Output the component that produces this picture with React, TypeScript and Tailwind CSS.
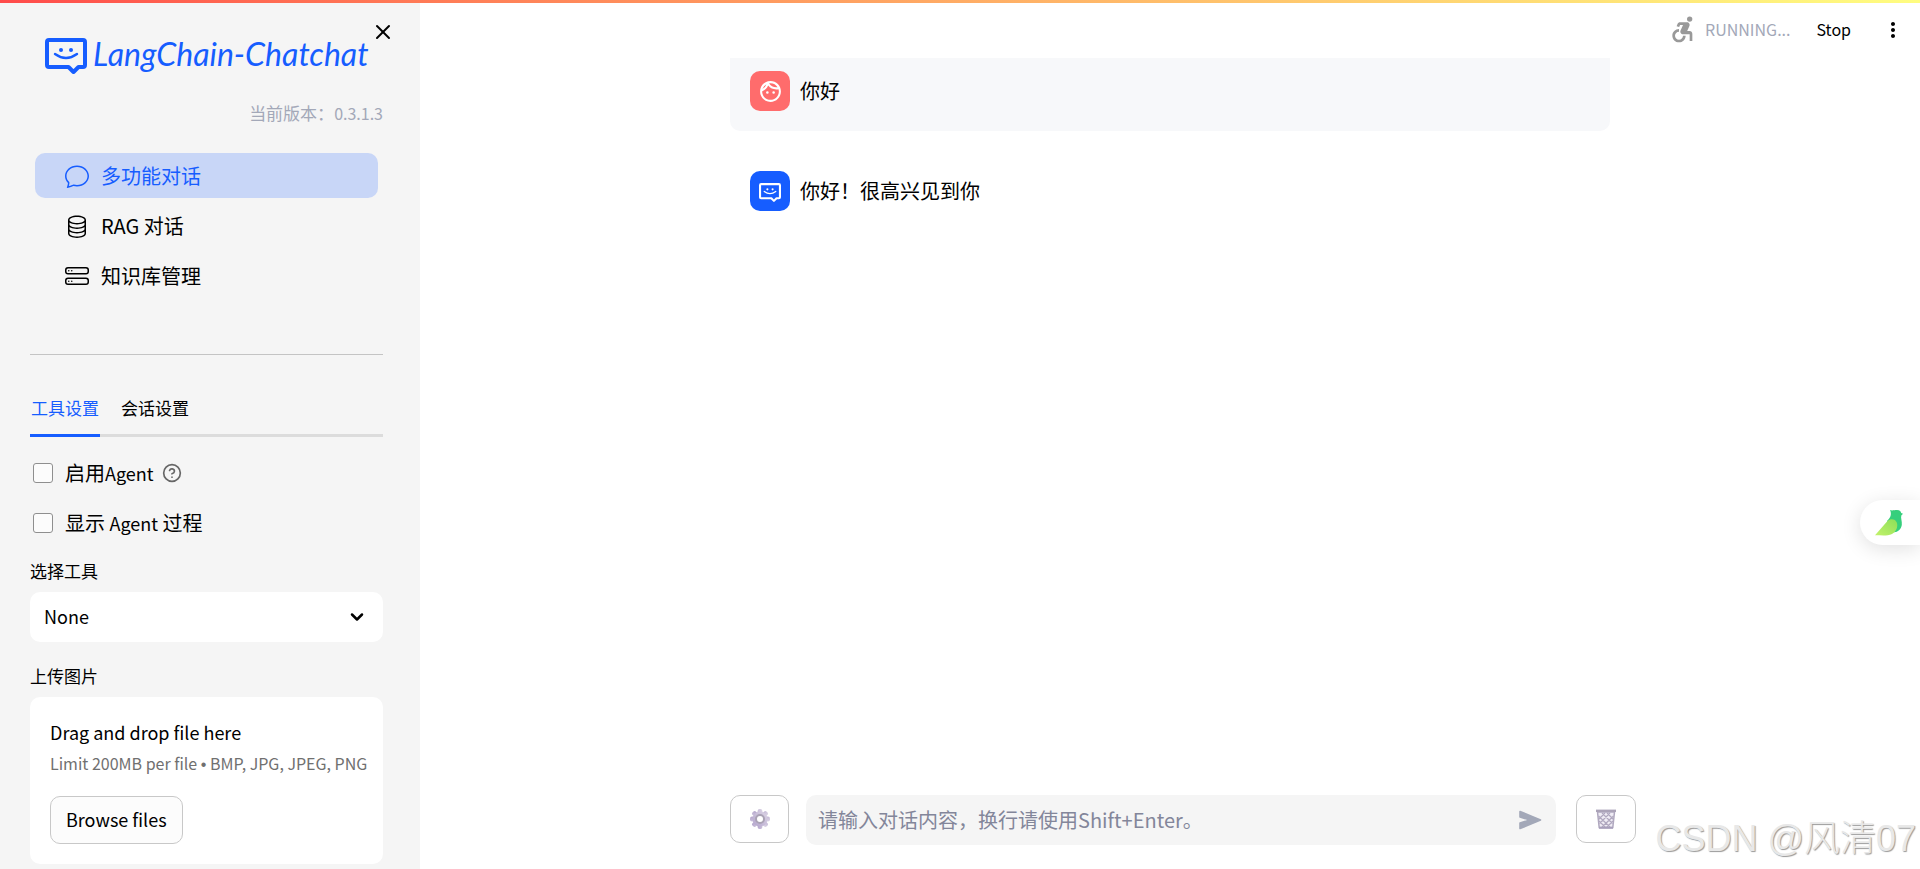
import { useState } from "react";
import type { ReactNode } from "react";
import { BsChat, BsDatabase, BsHddStack } from "react-icons/bs";
import { MdAccessibleForward, MdMoreVert, MdOutlineFace } from "react-icons/md";
import { ChevronDown, CircleHelp, X } from "lucide-react";

function ChatMark({ className, stroke }: { className: string; stroke: number }) {
  return (
    <svg viewBox="0 0 42 36" className={className} fill="none" stroke="currentColor" strokeWidth={stroke} strokeLinejoin="round" strokeLinecap="round" aria-hidden="true">
      <path d="M4 2H38Q40 2 40 4V27Q40 29 38 29H33.500L28.500 34L23.500 29H4Q2 29 2 27V4Q2 2 4 2Z" />
      <path d="M10 16Q21 24 32 16" strokeWidth={stroke * 0.6} />
      <circle cx="16" cy="12" r="2" fill="currentColor" stroke="none" />
      <circle cx="26" cy="12" r="2" fill="currentColor" stroke="none" />
    </svg>
  );
}

function GearIcon() {
  return (
    <svg viewBox="0 0 20 20" className="size-5" aria-hidden="true">
      <defs>
        <linearGradient id="gear" x1="1" y1="0" x2="0" y2="1">
          <stop offset="0" stopColor="#dcd5e6" />
          <stop offset="1" stopColor="#b3a4cb" />
        </linearGradient>
      </defs>
      <g fill="url(#gear)">
        {[0, 45, 90, 135].map((angle) => (
          <rect key={angle} x="7.600" y="0" width="4.800" height="20" rx="2" transform={`rotate(${angle} 10 10)`} />
        ))}
        <circle cx="10" cy="10" r="7.400" />
      </g>
      <circle cx="10" cy="10" r="4" fill="#fff" stroke="#aaa2b5" strokeWidth="2" />
    </svg>
  );
}

function BasketIcon() {
  return (
    <svg viewBox="0 0 20 20" className="size-5" fill="none" stroke="#b0a8bf" aria-hidden="true">
      <path d="M1.500 3L3.200 18.500H16.800L18.500 3Z" fill="#efecf4" stroke="#b0a8bf" strokeWidth="1.500" />
      <path d="M2.500 7L14 18M6 4L16.500 14.500M11 4L17.500 10.500M3 12L9.500 18.500M17.500 7L6 18M14 4L3.500 14.500M9 4L2.500 10.500M17 12L10.500 18.500" strokeWidth="1.200" />
      <path d="M0 1.800H20" stroke="#aba3b8" strokeWidth="2.400" />
      <path d="M3 18.800H17" stroke="#a89fbb" strokeWidth="2" />
    </svg>
  );
}

function SendIcon() {
  return (
    <svg viewBox="0 0 24 24" className="size-6" fill="#a3a8b8" stroke="#a3a8b8" strokeWidth="1.600" strokeLinejoin="round" aria-hidden="true">
      <path d="M2 3.500L22.500 12L2 20.500V15L12 12L2 9Z" />
    </svg>
  );
}

function BirdIcon() {
  return (
    <svg viewBox="0 0 28 26" className="h-[26px] w-7" aria-hidden="true">
      <defs>
        <linearGradient id="wing" x1="0" y1="1" x2="1" y2="0">
          <stop offset="0" stopColor="#c3f26b" />
          <stop offset="1" stopColor="#8ddf58" />
        </linearGradient>
      </defs>
      <path d="M15 0C17 1 19 0 22 0C25 0 26 1.500 26.200 3L28 3.800L26.300 5.500C25.500 8 27.300 11 26.800 15C26 20 21.500 23 18 22L12 11C15.500 8 17 4 15 0Z" fill="#36cf7c" />
      <path d="M0 25.300L12.500 11C15.500 8 20.500 8.700 21.800 12.500C23.300 17 21 22 17 24C12 26.300 6 25.200 0 25.300Z" fill="url(#wing)" />
    </svg>
  );
}

function NavItem({ icon, active = false, children }: { icon: ReactNode; active?: boolean; children: ReactNode }) {
  return (
    <a
      href="#"
      className={
        active
          ? "flex h-[45px] items-center gap-3 rounded-[10px] bg-[#c8d6f7] px-[30px] text-xl text-[#165dff]"
          : "flex h-[45px] items-center gap-3 rounded-[10px] px-[30px] text-xl text-black"
      }
    >
      {icon}
      <span>{children}</span>
    </a>
  );
}

function CheckRow({ id, children }: { id: string; children: ReactNode }) {
  return (
    <div className="flex h-[30px] items-center gap-3 pl-[3px]">
      <input id={id} type="checkbox" className="size-5 appearance-none rounded-[3px] border border-[#8f8f8f] bg-[#fcfcfc] checked:bg-[#165dff]" />
      {children}
    </div>
  );
}

function Message({ avatar, avatarClass, children }: { avatar: ReactNode; avatarClass: string; children: ReactNode }) {
  return (
    <div className="flex items-center gap-[10px] px-5">
      <div className={avatarClass}>{avatar}</div>
      <p className="pb-px text-xl">{children}</p>
    </div>
  );
}

export default function App() {
  const [text, setText] = useState("");

  return (
    <div className="relative flex min-h-screen overflow-hidden bg-white text-black [font-family:'Noto_Sans_CJK_SC',sans-serif]">
      <div className="absolute inset-x-0 top-0 h-[3px] bg-linear-to-r from-[#ff4b4b] to-[#fffd80]" />

      <aside className="w-[420px] shrink-0 bg-[#f5f5f5] pt-6 pr-[37px] pl-[30px]">
        <div className="relative flex h-16 items-center gap-[6px] pl-[15px] text-[#165dff]">
          <ChatMark className="h-9 w-[42px] shrink-0" stroke={4} />
          <span className="pb-1 text-[32px] leading-10 whitespace-nowrap italic [font-family:Lato,sans-serif]">LangChain-Chatchat</span>
          <button aria-label="Close sidebar" className="absolute -top-1 -right-3 text-black">
            <X className="size-6" strokeWidth={2} />
          </button>
        </div>
        <p className="mt-3 text-right text-[17px] leading-[26px] text-[#a3a8b8]">
          当前版本：<span className="text-base leading-[26px]">0.3.1.3</span>
        </p>

        <nav className="mt-[27px] mr-[5px] ml-[5px] flex flex-col gap-[5px]">
          <NavItem active icon={<BsChat className="size-6" />}>多功能对话</NavItem>
          <NavItem icon={<BsDatabase className="size-6" />}>RAG 对话</NavItem>
          <NavItem icon={<BsHddStack className="size-6" />}>知识库管理</NavItem>
        </nav>

        <hr className="mt-[56px] border-[#c4c4c4]" />

        <div role="tablist" className="mt-[28px] flex gap-5 border-b-[3px] border-[#dcdcdc] text-[17px]">
          <button role="tab" aria-selected="true" className="-mb-[3px] h-[54px] w-[70px] border-b-[3px] border-[#165dff] pb-[2px] text-[#165dff]">工具设置</button>
          <button role="tab" aria-selected="false" className="-mb-[3px] h-[54px] w-[70px] border-b-[3px] border-transparent pb-[2px]">会话设置</button>
        </div>

        <div className="mt-[21px] flex flex-col gap-5 text-xl">
          <CheckRow id="agent">
            <label htmlFor="agent" className="pb-px">启用<span className="text-lg">Agent</span></label>
            <CircleHelp className="-ml-1 size-5 text-[#666]" strokeWidth={2} />
          </CheckRow>
          <CheckRow id="steps">
            <label htmlFor="steps" className="pb-px">显示 <span className="text-lg">Agent</span> 过程</label>
          </CheckRow>
        </div>

        <label htmlFor="tool" className="mt-5 mb-2 block text-[17px] leading-[26px]">选择工具</label>
        <div className="relative">
          <select id="tool" className="h-[50px] w-full appearance-none rounded-[10px] bg-white px-[14px] pb-[2px] text-lg">
            <option>None</option>
          </select>
          <ChevronDown className="pointer-events-none absolute top-[15px] right-4 size-5" strokeWidth={3} />
        </div>

        <h2 className="mt-[21px] text-[17px] leading-[26px]">上传图片</h2>
        <section className="mt-2 mb-[6px] rounded-[10px] bg-white px-5 pt-[19px] pb-5">
          <p className="text-lg leading-8">Drag and drop file here</p>
          <p className="text-base leading-[30px] whitespace-nowrap text-[#707070]">
            Limit 200MB per file <span className="[font-family:'Liberation_Sans',sans-serif]">•</span> BMP, JPG, JPEG, PNG
          </p>
          <button className="mt-4 h-12 rounded-[10px] border border-[#c8c8c8] bg-[#fcfcfc] px-[15px] pb-[2px] text-lg">Browse files</button>
        </section>
      </aside>

      <main className="flex min-w-0 flex-1 flex-col">
        <header className="flex h-[58px] items-center justify-end pr-[15px]">
          <MdAccessibleForward className="size-8 text-[#999]" />
          <span className="ml-[6px] text-base text-[#a3a8b8]">RUNNING...</span>
          <button className="ml-[26px] text-base">Stop</button>
          <button aria-label="Menu" className="ml-[30px] pt-[2px]">
            <MdMoreVert className="size-6" />
          </button>
        </header>

        <div className="mx-auto flex w-full max-w-[880px] flex-1 flex-col">
          <div className="rounded-b-[10px] bg-[#f7f8fa] pt-[13px] pb-5">
            <Message avatarClass="flex size-10 items-center justify-center rounded-[10px] bg-[#ff6c6c] text-white" avatar={<MdOutlineFace className="size-[25px]" />}>
              你好
            </Message>
          </div>
          <div className="pt-10">
            <Message avatarClass="flex size-10 items-center justify-center rounded-[10px] bg-[#165dff] text-white" avatar={<ChatMark className="mt-[2px] h-[19px] w-[22px]" stroke={4} />}>
              你好！很高兴见到你
            </Message>
          </div>

          <form className="-mr-[26px] mt-auto mb-[25px] flex items-start" onSubmit={(event) => event.preventDefault()}>
            <button type="button" aria-label="Settings" className="flex h-12 w-[59px] items-center justify-center rounded-[10px] border border-[#c8c8c8]">
              <GearIcon />
            </button>
            <div className="mr-5 ml-[17px] flex h-[50px] flex-1 items-center rounded-[10px] bg-[#f5f5f5] pr-[14px] pl-3">
              <input
                aria-label="Message"
                value={text}
                onChange={(event) => setText(event.target.value)}
                placeholder="请输入对话内容，换行请使用Shift+Enter。"
                className="h-full min-w-0 flex-1 bg-transparent pb-[2px] text-xl outline-none placeholder:text-[#83869a]"
              />
              <button aria-label="Send">
                <SendIcon />
              </button>
            </div>
            <button type="button" aria-label="Clear" className="flex h-12 w-[60px] items-center justify-center rounded-[10px] border border-[#c8c8c8]">
              <BasketIcon />
            </button>
          </form>
        </div>
      </main>

      <button aria-label="Assistant" className="absolute top-[500px] right-0 flex h-[45px] w-[60px] items-center rounded-l-full bg-white pl-[15px] shadow-[0_4px_20px_rgba(0,0,0,0.12)]">
        <BirdIcon />
      </button>
      <p className="pointer-events-none absolute right-1 bottom-1 text-4xl leading-[54px] font-light whitespace-nowrap text-[#e8e8e8] [font-family:'Liberation_Sans','Noto_Sans_CJK_SC',sans-serif] [text-shadow:1px_1px_1px_#999]">
        CSDN @风清07
      </p>
    </div>
  );
}
